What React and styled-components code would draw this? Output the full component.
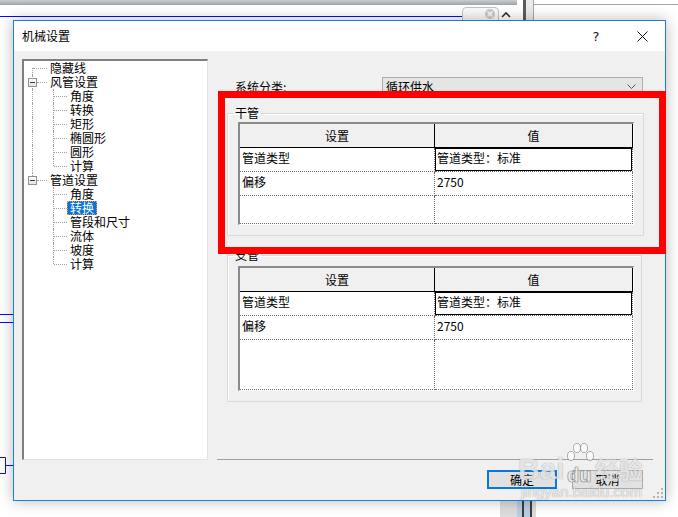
import React from 'react'
import styled, { createGlobalStyle } from 'styled-components'

const GlobalStyle = createGlobalStyle`
  html, body {
    margin: 0;
    padding: 0;
    background: #fff;
  }
  body {
    font-family: "Noto Sans CJK SC", "Liberation Sans", sans-serif;
    font-size: 12px;
    color: #000;
  }
  * { box-sizing: border-box; }
`;

const Desktop = styled.div`
  position: relative;
  width: 678px;
  height: 517px;
  overflow: hidden;
  background: #fff;
`;

/* ---------- background window bits ---------- */
const TopStrip = styled.div`
  position: absolute;
  left: 0;
  top: 0;
  width: 524px;
  height: 5px;
  background: linear-gradient(#c9ced4, #9ea3a9);
`;

const BlueLine = styled.div`
  position: absolute;
  left: 0;
  top: 16px;
  width: 497px;
  height: 1px;
  background: #0a0aff;
`;

const Badge = styled.div`
  position: absolute;
  left: 462px;
  top: 7px;
  width: 37px;
  height: 30px;
  border: 1px solid #c4c4c4;
  border-radius: 4px;
  background: #fafafa;
`;

const Divider = styled.div`
  position: absolute;
  left: 517px;
  top: 0;
  width: 18px;
  height: 517px;
  background: linear-gradient(
    to right,
    #fff 0 6px,
    #5b5b5b 6px 9px,
    #ebebeb 9px 16px,
    #a6a6a6 16px 17px,
    #fff 17px
  );
`;

const RightPanelTop = styled.div`
  position: absolute;
  left: 534px;
  top: 4px;
  width: 144px;
  height: 1px;
  background: #a6a6a6;
`;

const BottomBlock = styled.div`
  position: absolute;
  left: 500px;
  top: 500px;
  width: 36px;
  height: 17px;
  background: linear-gradient(
    to right,
    #dcdcdc 0 17px,
    #b9cde4 17px 22px,
    #3d3d3d 22px 24px,
    #b9cde4 24px 30px,
    #3d3d3d 30px 32px,
    #dcdcdc 32px
  );
`;

const LeftMarks = styled.svg`
  position: absolute;
  left: 0;
  top: 300px;
`;

/* ---------- dialog ---------- */
const Dialog = styled.div`
  position: absolute;
  left: 13px;
  top: 20px;
  width: 653px;
  height: 481px;
  border: 1px solid #1a7fd8;
  background: #f0f0f0;
  box-shadow: 0 0 14px rgba(0, 0, 0, 0.28);
  display: flex;
  flex-direction: column;
`;

const TitleBar = styled.div`
  height: 30px;
  background: #fff;
  display: flex;
  align-items: center;
  flex-shrink: 0;
`;

const Title = styled.div`
  flex: 1;
  padding-left: 8px;
  font-size: 12px;
  line-height: 16px;
`;

const CaptionButton = styled.div`
  width: 46px;
  height: 30px;
  display: flex;
  align-items: center;
  justify-content: center;
  font-family: "DejaVu Sans", sans-serif;
  font-size: 13px;
  color: #111;
`;

const Body = styled.div`
  flex: 1;
  display: flex;
  flex-direction: column;
  padding: 8px 0 0 8px;
`;

const Main = styled.div`
  display: flex;
  gap: 9px;
  height: 401px;
`;

/* ---------- tree ---------- */
const Tree = styled.div`
  width: 186px;
  height: 401px;
  background: #fff;
  border-top: 2px solid #7f7f7f;
  border-left: 2px solid #7f7f7f;
  border-right: 1px solid #e3e3e3;
  border-bottom: 1px solid #e3e3e3;
  padding-top: 0;
`;

const TreeRow = styled.div`
  display: flex;
  height: 14px;
  align-items: stretch;
`;

const Guide = styled.span`
  position: relative;
  flex-shrink: 0;
  width: ${p => p.$w}px;

  &::before {
    content: '';
    display: ${p => (p.$v ? 'block' : 'none')};
    position: absolute;
    left: 8px;
    top: ${p => (p.$v === 'first' ? '7px' : '0')};
    bottom: ${p => (p.$v === 'last' ? '7px' : '0')};
    border-left: 1px dotted #a0a0a0;
  }

  &::after {
    content: '';
    display: ${p => (p.$h ? 'block' : 'none')};
    position: absolute;
    left: ${p => (p.$box ? 13 : 9)}px;
    right: 0;
    top: 7px;
    border-top: 1px dotted #a0a0a0;
  }
`;

const Expander = styled.span`
  position: absolute;
  left: 4px;
  top: 3px;
  width: 9px;
  height: 9px;
  border: 1px solid #919191;
  background: linear-gradient(#fdfdfd, #e4e4e4);
  z-index: 1;

  &::after {
    content: '';
    position: absolute;
    left: 1px;
    top: 3px;
    width: 5px;
    height: 1px;
    background: #1f3b6e;
  }
`;

const TreeLabel = styled.span`
  padding: 0 3px;
  line-height: 14px;
  font-size: 12px;
  white-space: nowrap;
  color: ${p => (p.$selected ? '#fff' : '#000')};
  background: ${p => (p.$selected ? '#0a74d6' : 'transparent')};
  outline: ${p => (p.$selected ? '1px dotted #f0a030' : 'none')};
  outline-offset: -1px;
`;

const treeData = [
  { label: '隐藏线', type: 'first' },
  {
    label: '风管设置',
    type: 'mid',
    children: ['角度', '转换', '矩形', '椭圆形', '圆形', '计算'],
  },
  {
    label: '管道设置',
    type: 'last',
    children: ['角度', '转换', '管段和尺寸', '流体', '坡度', '计算'],
    selected: 1,
  },
];

function TreeView() {
  const rows = [];
  treeData.forEach((node, i) => {
    rows.push(
      <TreeRow key={`r${i}`}>
        <Guide $w={23} $v={node.type} $h $box={!!node.children}>
          {node.children && <Expander />}
        </Guide>
        <TreeLabel>{node.label}</TreeLabel>
      </TreeRow>
    );
    (node.children || []).forEach((c, j) => {
      const last = j === node.children.length - 1;
      rows.push(
        <TreeRow key={`r${i}-${j}`}>
          <Guide $w={21} $v={node.type === 'last' ? null : 'mid'} />
          <Guide $w={22} $v={last ? 'last' : 'mid'} $h />
          <TreeLabel $selected={node.selected === j}>{c}</TreeLabel>
        </TreeRow>
      );
    });
  });
  return <Tree>{rows}</Tree>;
}

/* ---------- right side ---------- */
const Pane = styled.div`
  width: 436px;
  height: 401px;
  display: flex;
  flex-direction: column;
  border-bottom: 1px solid #a0a0a0;
`;

const ClassRow = styled.div`
  margin-top: 18px;
  height: 20px;
  display: flex;
  align-items: center;
`;

const ClassLabel = styled.span`
  width: 165px;
  padding-left: 18px;
  line-height: 16px;
`;

const Combo = styled.div`
  width: 261px;
  height: 20px;
  border: 1px solid #adadad;
  background: #e5e5e5;
  display: flex;
  align-items: center;
  justify-content: space-between;
  padding: 0 6px 0 3px;
  line-height: 16px;
`;

const Group = styled.fieldset`
  margin: ${p => p.$top}px 0 0 10px;
  width: ${p => p.$w}px;
  padding: ${p => p.$pad}px 9px 10px 10px;
  border: 1px solid #d9d9d9;
  box-shadow: inset 1px 1px 0 #fff;
  min-width: 0;
`;

const Legend = styled.legend`
  margin-left: -5px;
  padding: 0 2px;
  line-height: 14px;
  font-size: 12px;
`;

const Grid = styled.div`
  width: 396px;
  display: grid;
  grid-template-columns: 195px 198px;
  grid-template-rows: 24px 24px 24px ${p => p.$fill}px;
  background: #fff;
  border-top: 2px solid #8a8a8a;
  border-left: 2px solid #8a8a8a;
  border-right: 1px solid #fff;
  border-bottom: 1px solid #fff;
`;

const HeadCell = styled.div`
  background: #f0f0f0;
  border-right: 1px solid #000;
  border-bottom: 1px solid #000;
  display: flex;
  align-items: center;
  justify-content: center;
  line-height: 16px;
`;

const Cell = styled.div`
  background: #fff;
  border-right: 1px dotted #6e6e6e;
  border-bottom: 1px dotted #6e6e6e;
  padding: 2px 2px 0;
  line-height: 16px;
  white-space: nowrap;
  box-shadow: ${p => (p.$active ? 'inset 0 0 0 1px #000' : 'none')};
`;

function SettingsGrid({ fill }) {
  return (
    <Grid $fill={fill}>
      <HeadCell>设置</HeadCell>
      <HeadCell>值</HeadCell>
      <Cell>管道类型</Cell>
      <Cell $active>管道类型：标准</Cell>
      <Cell>偏移</Cell>
      <Cell>2750</Cell>
      <Cell />
      <Cell />
    </Grid>
  );
}

/* ---------- footer ---------- */
const Footer = styled.div`
  display: flex;
  justify-content: flex-end;
  gap: 15px;
  padding-right: 22px;
  margin-top: 10px;
`;

const Button = styled.div`
  width: ${p => p.$w}px;
  height: 19px;
  background: #e1e1e1;
  border: ${p => (p.$default ? '2px solid #0a78d8' : '1px solid #adadad')};
  display: flex;
  align-items: center;
  justify-content: center;
  line-height: 16px;
`;

const Grip = styled.svg`
  position: absolute;
  right: 2px;
  bottom: 2px;
`;

/* ---------- overlays ---------- */
const Highlight = styled.div`
  position: absolute;
  left: 218px;
  top: 91px;
  width: 448px;
  height: 163px;
  border: 7px solid #ff0000;
`;

const Watermark = styled.div`
  position: absolute;
  left: 518px;
  top: 440px;
  width: 130px;
  height: 64px;
  color: rgba(255, 255, 255, 0.8);
  text-shadow: 0 0 1px rgba(0, 0, 0, 0.45);
  pointer-events: none;
`;

const MarkRow = styled.div`
  display: flex;
  align-items: flex-end;
  height: 44px;
`;

const MarkBig = styled.span`
  font-family: "Liberation Sans", sans-serif;
  font-weight: bold;
  font-size: 30px;
  line-height: 30px;
`;

const MarkCn = styled.span`
  font-size: 24px;
  line-height: 30px;
  font-weight: bold;
`;

const MarkUrl = styled.div`
  font-family: "Liberation Sans", sans-serif;
  font-size: 15px;
  line-height: 16px;
  padding-left: 3px;
`;

export default function App() {
  return (
    <Desktop>
      <GlobalStyle />
      <TopStrip />
      <BlueLine />
      <Badge>
        <svg width="12" height="12" style={{ position: 'absolute', left: 21, top: 0 }}>
          <circle cx="6" cy="6" r="5" fill="#c9c9c9" />
          <path d="M3.5 3.5 L8.5 8.5 M8.5 3.5 L3.5 8.5" stroke="#fff" strokeWidth="1.3" />
        </svg>
      </Badge>
      <svg width="10" height="8" style={{ position: 'absolute', left: 501, top: 11 }}>
        <path d="M1 6 L5 2 L9 6" stroke="#333" strokeWidth="1.6" fill="none" />
      </svg>
      <Divider />
      <RightPanelTop />
      <BottomBlock />
      <LeftMarks width="14" height="180">
        <path d="M0 14.5 H13 M0 22.5 H13" stroke="#0a0aff" />
        <path d="M0 157.5 H5.5 V173.5 H0 M5.5 165.5 H13" stroke="#0a0aff" fill="none" />
      </LeftMarks>

      <Dialog>
        <TitleBar>
          <Title>机械设置</Title>
          <CaptionButton>?</CaptionButton>
          <CaptionButton>
            <svg width="11" height="11">
              <path d="M0.5 0.5 L10.5 10.5 M10.5 0.5 L0.5 10.5" stroke="#111" strokeWidth="1" />
            </svg>
          </CaptionButton>
        </TitleBar>
        <Body>
          <Main>
            <TreeView />
            <Pane>
              <ClassRow>
                <ClassLabel>系统分类:</ClassLabel>
                <Combo>
                  <span>循环供水</span>
                  <svg width="9" height="6">
                    <path d="M0.5 0.5 L4.5 4.5 L8.5 0.5" stroke="#555" fill="none" />
                  </svg>
                </Combo>
              </ClassRow>
              <Group $top={9} $w={417} $pad={2}>
                <Legend>干管</Legend>
                <SettingsGrid fill={28} />
              </Group>
              <Group $top={12} $w={415} $pad={4}>
                <Legend>支管</Legend>
                <SettingsGrid fill={50} />
              </Group>
            </Pane>
          </Main>
          <Footer>
            <Button $w={70} $default>确定</Button>
            <Button $w={71}>取消</Button>
          </Footer>
        </Body>
        <Grip width="10" height="10">
          <g fill="#b5b5b5">
            <rect x="8" y="0" width="2" height="2" />
            <rect x="4" y="4" width="2" height="2" />
            <rect x="8" y="4" width="2" height="2" />
            <rect x="0" y="8" width="2" height="2" />
            <rect x="4" y="8" width="2" height="2" />
            <rect x="8" y="8" width="2" height="2" />
          </g>
        </Grip>
      </Dialog>

      <Highlight />

      <Watermark>
        <MarkRow>
          <MarkBig>Bai</MarkBig>
          <svg width="30" height="42" viewBox="0 0 30 42">
            <g fill="rgba(255,255,255,0.8)" stroke="rgba(0,0,0,0.3)">
              <ellipse cx="6" cy="14" rx="3.5" ry="4.5" />
              <ellipse cx="12" cy="6" rx="3.5" ry="4.5" />
              <ellipse cx="19" cy="6" rx="3.5" ry="4.5" />
              <ellipse cx="25" cy="14" rx="3.5" ry="4.5" />
            </g>
            <text x="2" y="40" fontFamily="Liberation Sans" fontWeight="bold" fontSize="20" fill="rgba(255,255,255,0.85)" stroke="rgba(0,0,0,0.3)" strokeWidth="0.6">du</text>
          </svg>
          <MarkCn>经验</MarkCn>
        </MarkRow>
        <MarkUrl>jingyan.baidu.com</MarkUrl>
      </Watermark>
    </Desktop>
  );
}
